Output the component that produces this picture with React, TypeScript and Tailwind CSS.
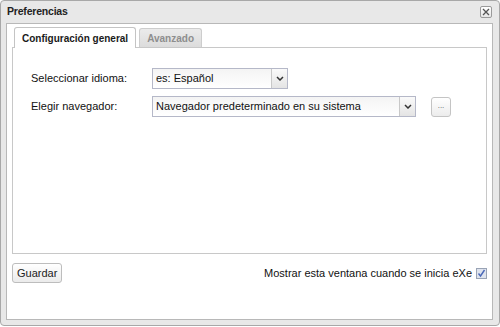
import React from "react";

function Chevron() {
  return (
    <svg width="8" height="5" viewBox="0 0 8 5">
      <path d="M1 1 L4 4 L7 1" fill="none" stroke="#333" strokeWidth="1.5" />
    </svg>
  );
}

function Select({ value, width }: { value: string; width: string }) {
  return (
    <div className={`flex h-[21px] ${width} border border-[#b5b8c8] bg-white`}>
      <div className="flex flex-1 items-center pl-[3px] text-[11px] text-[#111] bg-gradient-to-b from-[#f4f4f4] to-white">
        {value}
      </div>
      <div className="flex w-[16px] items-center justify-center border-l border-[#c8c8c8] bg-gradient-to-b from-[#fafafa] to-[#e4e4e4]">
        <Chevron />
      </div>
    </div>
  );
}

export default function App() {
  return (
    <div
      className="w-[500px] h-[327px] bg-white"
      style={{ fontFamily: '"Liberation Sans", Arial, sans-serif' }}
    >
      <div className="flex h-[326px] w-[500px] flex-col rounded-[4px] border border-[#a8a8a8] bg-[#e8e8e8] pl-[5px] pr-[6px] pb-[5px]">
        <div className="flex h-[22px] items-center justify-between pl-[1px] pr-[1px]">
          <span className="text-[10.5px] font-bold text-[#222] tracking-[-0.2px]">Preferencias</span>
          <div className="flex h-[12px] w-[12px] items-center justify-center rounded-[2px] border border-[#9a9a9a] bg-gradient-to-b from-white to-[#e6e6e6]">
            <svg width="8" height="8" viewBox="0 0 8 8">
              <path d="M1 1 L7 7 M7 1 L1 7" stroke="#555" strokeWidth="1.3" />
            </svg>
          </div>
        </div>
        <div className="flex flex-1 flex-col border border-[#b8b8b8] bg-white px-[5px]">
          <div className="flex h-[23px] items-end gap-[3px] pl-[2px] pt-[2px]">
            <div className="relative -mb-px flex h-[21px] items-center rounded-t-[3px] border border-b-0 border-[#c4c4c4] bg-white px-[7px] text-[10px] font-bold text-[#1a1a1a]">
              Configuración general
            </div>
            <div className="flex h-[19px] items-center rounded-t-[3px] border border-b-0 border-[#cdcdcd] bg-gradient-to-b from-[#ebebeb] to-[#dcdcdc] px-[7px] text-[10px] font-bold text-[#8e8e8e]">
              Avanzado
            </div>
          </div>
          <div className="flex h-[207px] flex-col gap-[7px] border border-[#c8c8c8] pl-[18px] pt-[20px]">
            <div className="flex items-center">
              <div className="w-[121px] text-[11px] text-[#111]">Seleccionar idioma:</div>
              <Select value="es: Español" width="w-[136px]" />
            </div>
            <div className="flex items-center">
              <div className="w-[121px] text-[11px] text-[#111]">Elegir navegador:</div>
              <Select value="Navegador predeterminado en su sistema" width="w-[264px]" />
              <div className="ml-[15px] flex h-[20px] w-[20px] items-center justify-center rounded-[3px] border border-[#c4c4c4] bg-gradient-to-b from-white to-[#ececec] pb-[2px] text-[8px] text-[#555]">
                ...
              </div>
            </div>
          </div>
          <div className="flex items-center justify-between pt-[9px]">
            <div className="flex h-[20px] items-center rounded-[3px] border border-[#bdbdbd] bg-gradient-to-b from-white to-[#ebebeb] px-[4px] text-[11px] text-[#222]">
              Guardar
            </div>
            <div className="flex items-center gap-[4px] text-[11px] text-[#111]">
              <span>Mostrar esta ventana cuando se inicia eXe</span>
              <svg width="11" height="11" viewBox="0 0 11 11">
                <rect x="0.5" y="0.5" width="10" height="10" fill="#dfe4ee" stroke="#99a3b5" />
                <path d="M2.5 5.5 L4.5 8 L8.5 2" fill="none" stroke="#4a68b8" strokeWidth="1.4" />
              </svg>
            </div>
          </div>
        </div>
      </div>
    </div>
  );
}
